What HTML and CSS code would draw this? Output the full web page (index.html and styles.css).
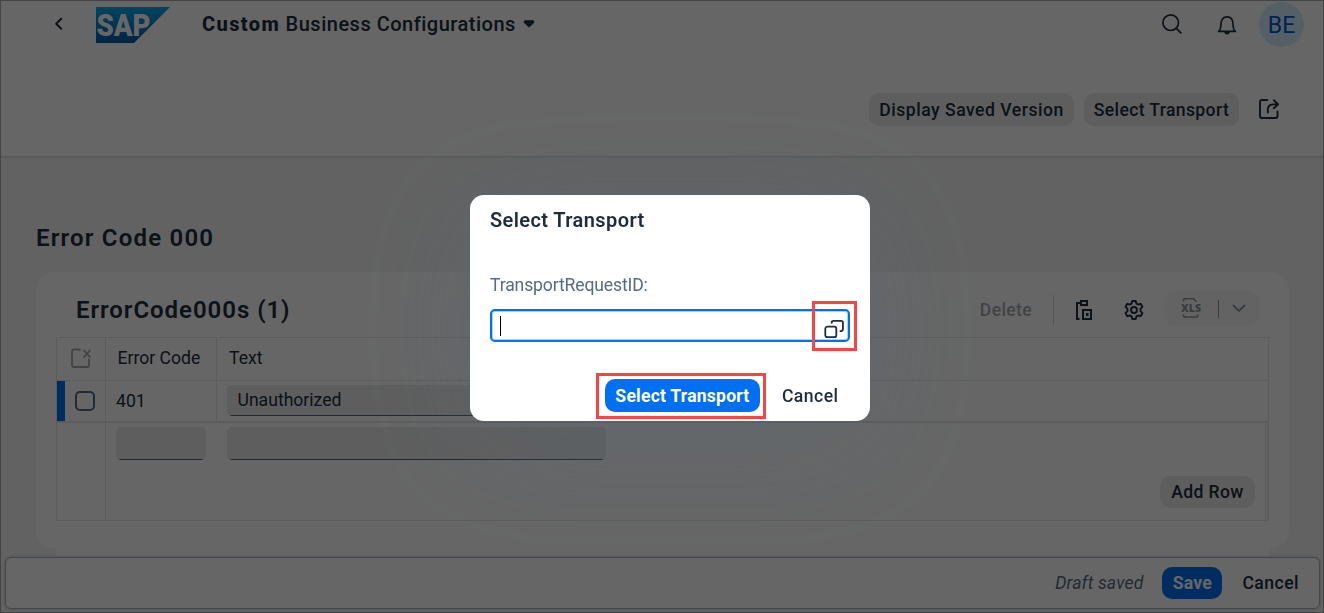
FILE: index.html
```html
<!DOCTYPE html>
<html lang="en">
<head>
<meta charset="utf-8">
<title>Custom Business Configurations</title>
<link rel="stylesheet" href="styles.css">
</head>
<body>
<div class="app">
  <header class="page-header">
    <div class="shell">
      <svg class="back" width="10" height="14" viewBox="0 0 10 14"><path d="M7.2 1.8 2.2 6.8l5 5" fill="none" stroke="#1d2d3e" stroke-width="2" stroke-linecap="round" stroke-linejoin="round"/></svg>
      <svg class="logo" width="74" height="36" viewBox="0 0 74 36">
        <defs><linearGradient id="sap" x1="0" y1="0" x2="0" y2="1"><stop offset="0" stop-color="#00aeef"/><stop offset="1" stop-color="#0058a8"/></linearGradient></defs>
        <path d="M0 0h74L38 36H0z" fill="url(#sap)"/>
        <text x="0.5" y="29" textLength="54" lengthAdjust="spacingAndGlyphs">SAP</text>
      </svg>
      <h1 class="app-title"><b>Custom</b> <span>Business Configurations</span></h1>
      <svg class="drop" width="12" height="8" viewBox="0 0 12 8"><path d="M1.500.8h9L11 2.300 6.600 6.600Q6 7 5.400 6.600L1 2.300z" fill="#1d2d3e" stroke="#1d2d3e" stroke-linejoin="round"/></svg>
      <div class="shell-actions">
        <svg width="20" height="20" viewBox="0 0 20 20" fill="none" stroke="#1d2d3e" stroke-width="1.7" stroke-linecap="round"><circle cx="8.700" cy="8.700" r="7.800"/><path d="m14.300 14.300 4.600 4.600"/></svg>
        <svg class="bell" width="20" height="20" viewBox="0 0 20 20"><path d="M1.700 16.400c1.900-1.700 2.200-3.700 2.200-6.200C3.900 4.800 6 1.900 10 1.900s6.100 2.900 6.100 8.300c0 2.500.3 4.500 2.200 6.200z" fill="none" stroke="#1d2d3e" stroke-width="1.700" stroke-linejoin="round"/><path d="M7 17h6q-.7 2.500-3 2.500T7 17z" fill="#1d2d3e"/></svg>
        <div class="avatar">BE</div>
      </div>
    </div>
    <div class="object-actions">
      <button class="btn display">Display Saved Version</button>
      <button class="btn select">Select Transport</button>
      <svg class="share" width="22" height="22" viewBox="0 0 22 22" fill="none" stroke="#1d2d3e" stroke-width="1.900" stroke-linecap="round" stroke-linejoin="round"><path d="M9.300 2H4Q2 2 2 4v14q0 2 2 2h13.500q2 0 2-2v-4.500M9.800 14.500V12q0-5.600 6-5.600h4M15.800 2.300l4.200 4-4.200 4"/></svg>
    </div>
  </header>

  <main class="content">
    <h2 class="object-title">Error Code 000</h2>
    <section class="card">
      <div class="card-head">
        <h2>ErrorCode000s (1)</h2>
        <div class="table-tools">
          <span class="delete">Delete</span>
          <i class="divider"></i>
          <svg class="paste" width="18" height="22" viewBox="0 0 18 22" fill="none" stroke="#1d2d3e" stroke-width="2"><path d="M4.500 20H2V4h4M6 2h6v4H6z"/><path d="M8 11h8v9H8z"/><path d="M11 14h2.500v3H11z" fill="#1d2d3e" stroke="none"/></svg>
          <svg class="gear" width="20" height="22" viewBox="0 0 20 22" fill="none" stroke="#1d2d3e" stroke-width="1.900" stroke-linejoin="round"><path d="M8.300 2h3.400l.8 2.600 1.500.9 2.700-.7 1.700 3-1.900 2v2.400l1.900 2-1.700 3-2.700-.7-1.500.9-.8 2.600H8.300l-.8-2.600-1.500-.9-2.700.7-1.700-3 1.900-2V9.800l-1.900-2 1.700-3 2.700.7 1.500-.9z"/><circle cx="10" cy="11" r="3"/></svg>
          <div class="export">
            <svg class="xls" width="22" height="22" viewBox="0 0 22 22"><path d="M3.500 4.500V3q0-1.200 1.200-1.200h8.800l3 3M3.500 17.500v1q0 1.500 1.500 1.500h11.500q1.500 0 1.500-1.500v-1" fill="none" stroke="#1d2d3e" stroke-width="1.600"/><text x="1" y="14.800" textLength="20">XLS</text></svg>
            <i></i>
            <svg width="14" height="9" viewBox="0 0 14 9"><path d="m1.500 1.500 5.500 5.500 5.500-5.500" fill="none" stroke="#1d2d3e" stroke-width="1.900" stroke-linecap="round"/></svg>
          </div>
        </div>
      </div>
      <div class="table">
        <div class="row head">
          <div class="cell"><svg class="clear" width="22" height="22" viewBox="0 0 22 22" fill="none" stroke="#1d2d3e" stroke-width="1.800" stroke-linecap="round"><path d="M10 2.500H4q-2 0-2 2V18q0 2 2 2h13q2 0 2-2v-5.500M14 3.500l6 6.500M20 3.500 14 10"/></svg></div>
          <div class="cell"><span class="th-code">Error Code</span></div>
          <div class="cell"><span class="th-text">Text</span></div>
        </div>
        <div class="row item">
          <div class="cell"><i class="marker"></i><i class="check"></i></div>
          <div class="cell"><span class="code">401</span></div>
          <div class="cell"><div class="input"><span>Unauthorized</span></div></div>
        </div>
        <div class="row create">
          <div class="cell"></div>
          <div class="create-area">
            <div class="new-inputs"><div class="input short"></div><div class="input"></div></div>
            <button class="btn add">Add Row</button>
          </div>
        </div>
      </div>
    </section>
    <div class="next-section"></div>
  </main>

  <footer class="footer">
    <em>Draft saved</em>
    <button class="btn primary save">Save</button>
    <span class="cancel">Cancel</span>
  </footer>
</div>

<div class="overlay">
  <div class="dialog">
    <h2>Select Transport</h2>
    <label>TransportRequestID:</label>
    <div class="field">
      <i class="caret"></i>
      <svg width="20" height="20" viewBox="0 0 20 20" fill="none" stroke="#1d2d3e" stroke-width="1.800" stroke-linecap="round"><rect x="1.300" y="7.700" width="11" height="10.500" rx="2"/><path d="M7.700 3.800Q7.700 1.900 9.600 1.900H17q1.900 0 1.900 1.900v6.400q0 1.900-2.500 1.900"/></svg>
      <i class="callout callout-help"></i>
    </div>
    <div class="dialog-actions">
      <button class="btn primary">Select Transport<i class="callout callout-select"></i></button>
      <span class="cancel">Cancel</span>
    </div>
  </div>
</div>
</body>
</html>
```

FILE: styles.css
```css
* { box-sizing: border-box; }
body {
  margin: 0;
  width: 1324px;
  height: 613px;
  overflow: hidden;
  font-family: Roboto, "Liberation Sans", sans-serif;
  font-size: 17.6px;
  color: #1d2d3e;
}
h1, h2 { margin: 0; font-weight: 600; white-space: nowrap; }
svg { display: block; flex: none; }
i { display: block; flex: none; }

.app { height: 613px; display: flex; flex-direction: column; background: #f5f5f5; }
.page-header { height: 157px; flex: none; background: #fff; border-bottom: 1px solid #d9dadb; box-shadow: 0 1px 1px #e8e9ea; }
.shell { height: 49px; display: flex; align-items: center; padding: 0 20px 0 54px; }
.back { margin-top: -1px; }
.logo { margin-left: 32px; margin-top: 1px; }
.logo text { font: 900 31px Roboto, sans-serif; fill: #fff; }
.app-title { margin: -2px 0 0 32px; width: 314px; font-size: 20px; font-weight: 500; letter-spacing: .5px; }
.app-title b { font-weight: 800; letter-spacing: 1.400px; }
.drop { margin: -2px 0 0 6.500px; }
.shell-actions { margin-left: auto; display: flex; align-items: center; }
.shell-actions > svg:first-child { margin-top: -2px; }
.bell.bell { margin: 0 22px 0 35px; }
.avatar { width: 45px; height: 45px; border-radius: 50%; background: #d1efff; color: #0057d2; font-size: 23px; line-height: 47px; text-align: center; }

.object-actions { display: flex; align-items: center; justify-content: flex-end; gap: 10px; padding: 44px 44px 0 0; }
.btn { font: 500 17.600px Roboto, sans-serif; color: #1d2d3e; height: 33px; border: 0; border-radius: 10px; background: #ebebeb; padding: 0; white-space: nowrap; text-align: center; letter-spacing: .35px; }
.display { width: 205px; letter-spacing: .5px; }
.select { width: 155px; }
.share { margin: -1px 0 0 9px; }
.primary { position: relative; background: #0070f2; color: #fff; font-weight: 700; letter-spacing: .2px; }

.content { flex: 1; padding: 65px 35px 0 36px; }
.object-title, .card-head h2 { font-size: 24px; line-height: 32px; letter-spacing: 1.200px; }
.card { margin-top: 18px; height: 276px; background: #fff; border-radius: 18px; padding: 0 20px; }
.card-head { height: 65px; padding: 19px 10px 0 20px; display: flex; justify-content: space-between; align-items: flex-start; }
.card-head h2 { line-height: 38px; letter-spacing: .95px; }
.table-tools { display: flex; align-items: center; height: 37px; }
.delete { font-weight: 500; opacity: .4; letter-spacing: .35px; }
.divider { width: 1px; height: 30px; background: #d0d2d4; margin: 0 21px 0 20.500px; }
.gear { margin: 0 20px 0 31.500px; }
.export { width: 95px; height: 35px; margin-top: -2px; border-radius: 11px; background: #f8f8f8; display: flex; align-items: center; padding-left: 16px; }
.export svg { opacity: .48; }
.export .xls { margin-top: -2px; }
.export text { font: 800 10.500px "Open Sans", sans-serif; fill: #1d2d3e; }
.export i { width: 1px; height: 18px; background: #8d949c; margin: 0 13px 0 16px; }

.table { height: 184px; border: 1px solid #e5e5e5; display: flex; flex-direction: column; }
.row { display: grid; grid-template-columns: 49px 111px 1fr; border-bottom: 1px solid #e5e5e5; }
.head { height: 43px; }
.item { height: 42px; border-bottom-width: 2px; }
.create { flex: 1; grid-template-columns: 49px 1fr; border-bottom: 0; border-right: 1px solid #e5e5e5; }
.cell { display: flex; align-items: center; border-right: 1px solid #e5e5e5; }
.cell:last-child { border-right: 0; }
.clear { margin: -2px 0 0 13px; opacity: .4; }
.th-code { margin: -2px 0 0 11.500px; }
.th-text { margin: -2px 0 0 12px; }
.marker { width: 8px; height: 40px; background: #0070f2; }
.check { width: 20px; height: 20px; margin-left: 10px; border: 2px solid #556b82; border-radius: 5px; }
.code { margin-left: 10px; }
.input { width: 379px; height: 33px; background: #ebebeb linear-gradient(#556b82, #556b82) center bottom / calc(100% - 4px) 1px no-repeat; border-radius: 5px; }
.cell .input { margin: -1px 0 0 10px; height: 31px; padding: 5px 10.500px; line-height: 20px; }
.create-area { display: flex; flex-direction: column; align-items: flex-end; padding: 4px 10px 0; border-right: 1px solid #e5e5e5; margin-right: 1px; }
.new-inputs { align-self: stretch; display: flex; gap: 21px; }
.input.short { width: 90px; }
.add { width: 95px; height: 32px; margin: 16px 0 0; }
.next-section { height: 9px; margin: 0 20px; background: #fff; }

.footer { height: 52px; flex: none; margin: 0 4px 4px 5px; border: 1px solid #a9b0b8; border-radius: 6px; background: #fff; box-shadow: 0 0 3px #b8bdc6; display: flex; align-items: center; justify-content: flex-end; padding-right: 20px; }
.footer em { color: #556b82; letter-spacing: .15px; }
.save { width: 60px; height: 32px; margin: 0 20px 0 19px; border-radius: 10px; }
.cancel { font-weight: 500; letter-spacing: .45px; }

.overlay { position: fixed; inset: 0; background: rgba(0, 0, 0, .6); border: 1px solid #444; padding: 194px 0 0 469px; }
.dialog { width: 400px; height: 226px; background: #fff; border-radius: 14px; padding: 11px 20px 0; box-shadow: 0 22px 115px rgba(85, 107, 130, .27), 0 0 2px rgba(85, 107, 130, .8); }
.dialog h2 { font-size: 20px; line-height: 28px; letter-spacing: .4px; }
.dialog label { display: block; margin-top: 40px; line-height: 22px; color: #556b82; letter-spacing: -.15px; }
.field { position: relative; height: 33px; margin-top: 13px; border: 2px solid #0070f2; border-radius: 5px; display: flex; align-items: center; justify-content: space-between; padding: 0 4px 0 8px; box-shadow: inset 0 0 0 1px #aed1fa; }
.field svg { margin-top: 6px; }
.caret { width: 1px; height: 20px; background: #000; }
.callout { position: absolute; border: 3px solid #fa4343; }
.callout-help { left: 320px; top: -10px; width: 45px; height: 50px; }
.dialog-actions { display: flex; align-items: center; justify-content: flex-end; gap: 22px; margin-top: 37px; padding-right: 11.500px; }
.dialog-actions .btn { width: 155px; }
.callout-select { left: -9px; top: -6px; width: 170px; height: 46px; }
```
